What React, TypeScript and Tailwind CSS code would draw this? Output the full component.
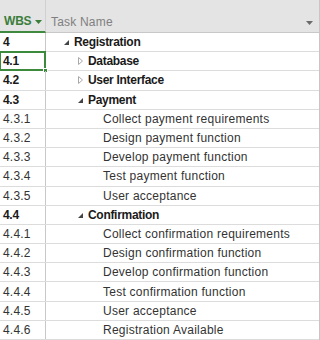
import React from 'react'

type Row = {
    wbs: string
    name: string
    level: number
    bold?: boolean
    toggle?: 'open' | 'closed'
}

const rows: Row[] = [
    { wbs: '4', name: 'Registration', level: 0, bold: true, toggle: 'open' },
    { wbs: '4.1', name: 'Database', level: 1, bold: true, toggle: 'closed' },
    { wbs: '4.2', name: 'User Interface', level: 1, bold: true, toggle: 'closed' },
    { wbs: '4.3', name: 'Payment', level: 1, bold: true, toggle: 'open' },
    { wbs: '4.3.1', name: 'Collect payment requirements', level: 2 },
    { wbs: '4.3.2', name: 'Design payment function', level: 2 },
    { wbs: '4.3.3', name: 'Develop payment function', level: 2 },
    { wbs: '4.3.4', name: 'Test payment function', level: 2 },
    { wbs: '4.3.5', name: 'User acceptance', level: 2 },
    { wbs: '4.4', name: 'Confirmation', level: 1, bold: true, toggle: 'open' },
    { wbs: '4.4.1', name: 'Collect confirmation requirements', level: 2 },
    { wbs: '4.4.2', name: 'Design confirmation function', level: 2 },
    { wbs: '4.4.3', name: 'Develop confirmation function', level: 2 },
    { wbs: '4.4.4', name: 'Test confirmation function', level: 2 },
    { wbs: '4.4.5', name: 'User acceptance', level: 2 },
    { wbs: '4.4.6', name: 'Registration Available', level: 2 },
]

const indents = ['pl-[18px]', 'pl-[32px]', 'pl-[57px]']

function Toggle({ kind }: { kind: 'open' | 'closed' }) {
    if (kind === 'open') {
        return (
            <svg width="5" height="5" viewBox="0 0 5 5" className="mr-[5px] mt-[1px]">
                <polygon points="5,0 5,5 0,5" fill="#444" />
            </svg>
        )
    }
    return (
        <svg width="5" height="8" viewBox="0 0 5 8" className="mr-[5px]">
            <polygon points="0.5,0.5 4.5,4 0.5,7.5" fill="none" stroke="#aaa" strokeWidth="1" />
        </svg>
    )
}

export default function App() {
    return (
        <div className="w-[320px] h-[340px] overflow-hidden bg-white font-['Liberation_Sans',sans-serif] text-[12px] border-r border-[#c6c6c6]">
            {/* header */}
            <div className="flex h-[33px] bg-[#e4e4e4] border-b border-[#c8c8c8]">
                <div className="relative w-[46px] flex items-end pb-[1px] pl-[4px] border-r border-[#d0d0d0] border-b-2 border-b-[#3f8a3f] -mb-px">
                    <span className="font-bold text-[#3b7d3b] tracking-[-0.2px]">WBS</span>
                    <svg width="7" height="4" viewBox="0 0 7 4" className="ml-[4px] mb-[6px]">
                        <polygon points="0,0 7,0 3.5,4" fill="#3b7d3b" />
                    </svg>
                </div>
                <div className="flex-1 flex items-end justify-between pb-[1px] pl-[5px] pr-[6px]">
                    <span className="text-[#808080] tracking-[0.2px]">Task Name</span>
                    <svg width="7" height="4" viewBox="0 0 7 4" className="mb-[6px]">
                        <polygon points="0,0 7,0 3.5,4" fill="#6a6a6a" />
                    </svg>
                </div>
            </div>

            {/* body */}
            {rows.map((r, i) => (
                <div key={r.wbs} className="flex h-[19.2px] border-b border-[#dcdcdc] text-[#333]">
                    <div
                        className={
                            'relative w-[46px] flex items-center pl-[3px] border-r border-[#c8c8c8] ' +
                            (r.bold ? 'font-bold text-[#1a1a1a] tracking-[-0.3px]' : 'tracking-[0.2px]')
                        }
                    >
                        {r.wbs}
                        {i === 1 && (
                            <>
                                <div className="absolute -left-px -top-px right-[-1px] bottom-[-1px] border-2 border-[#3c8a3c]" />
                                <div className="absolute right-[-3px] bottom-[-3px] w-[5px] h-[5px] bg-[#3c8a3c] border border-white" />
                            </>
                        )}
                    </div>
                    <div className={'flex-1 flex items-center ' + indents[r.level]}>
                        {r.toggle && <Toggle kind={r.toggle} />}
                        <span
                            className={
                                r.bold ? 'font-bold text-[#1a1a1a] tracking-[-0.3px]' : 'tracking-[0.25px]'
                            }
                        >
                            {r.name}
                        </span>
                    </div>
                </div>
            ))}
        </div>
    )
}
